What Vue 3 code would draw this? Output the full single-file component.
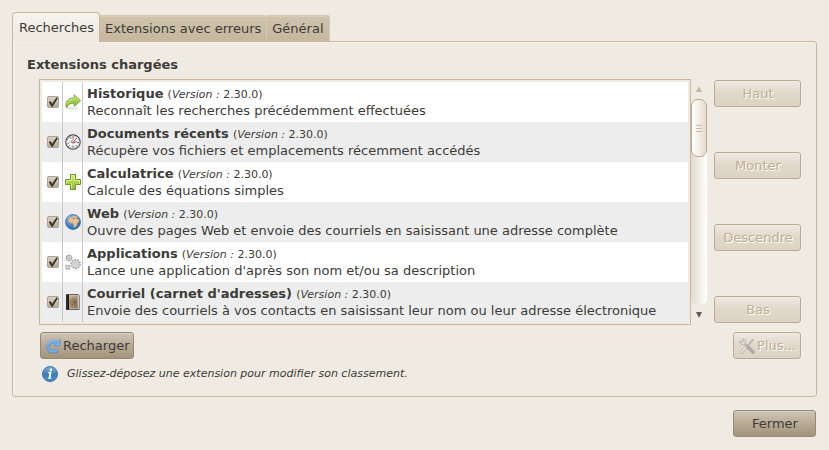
<script setup>
import { ref } from 'vue'

const tabs = ['Recherches', 'Extensions avec erreurs', 'Général']
const activeTab = ref(0)

const extensions = ref([
  { id: 'history', name: 'Historique', text: 'Reconnaît les recherches précédemment effectuées', version: '2.30.0', on: true },
  { id: 'recent', name: 'Documents récents', text: 'Récupère vos fichiers et emplacements récemment accédés', version: '2.30.0', on: true },
  { id: 'calc', name: 'Calculatrice', text: 'Calcule des équations simples', version: '2.30.0', on: true },
  { id: 'web', name: 'Web', text: 'Ouvre des pages Web et envoie des courriels en saisissant une adresse complète', version: '2.30.0', on: true },
  { id: 'apps', name: 'Applications', text: "Lance une application d'après son nom et/ou sa description", version: '2.30.0', on: true },
  { id: 'mail', name: "Courriel (carnet d'adresses)", text: 'Envoie des courriels à vos contacts en saisissant leur nom ou leur adresse électronique', version: '2.30.0', on: true },
])

const moves = ['Haut', 'Monter', 'Descendre', 'Bas']
</script>

<template>
  <main class="window">
    <div class="tabs" role="tablist">
      <button
        v-for="(tab, i) in tabs"
        :key="tab"
        type="button"
        role="tab"
        class="tab"
        :class="{ active: i === activeTab }"
        :aria-selected="i === activeTab"
        @click="activeTab = i"
      >{{ tab }}</button>
    </div>

    <section class="panel">
      <h1 class="heading">Extensions chargées</h1>

      <div class="body">
        <div class="list-frame">
          <table class="list">
            <tbody>
              <tr v-for="ext in extensions" :key="ext.id">
                <td class="check-cell">
                  <input :id="ext.id" v-model="ext.on" class="check" type="checkbox" />
                </td>
                <td class="icon-cell">
                  <svg v-if="ext.id === 'history'" class="icon" viewBox="0 0 16 16" aria-hidden="true">
                    <defs>
                      <linearGradient id="g-arrow" x1="0" y1="0" x2="0" y2="1">
                        <stop offset="0" stop-color="#c6e36a" /><stop offset="1" stop-color="#7cb32a" />
                      </linearGradient>
                    </defs>
                    <ellipse cx="7" cy="14.3" rx="6" ry="1.2" fill="#000" opacity=".12" />
                    <path d="M9.3.8 15.7 6.6 9.3 12.4V9.2C5.8 8.9 3.2 10 1.6 14-.8 8.2 3 3.9 9.3 3.9z" fill="url(#g-arrow)" stroke="#6b9a28" stroke-width=".8" stroke-linejoin="round" />
                    <path d="M10.1 2.7 14.3 6.6M1.8 10.2C2.8 6.5 6 5 10 4.9" fill="none" stroke="#e3f2ac" stroke-width=".8" />
                  </svg>
                  <svg v-else-if="ext.id === 'recent'" class="icon" viewBox="0 0 16 16" aria-hidden="true">
                    <circle cx="8" cy="8" r="7.2" fill="#f4f4f2" stroke="#4b4d4a" stroke-width="1.2" />
                    <circle cx="8" cy="8" r="6" fill="none" stroke="#c9cac7" stroke-width=".7" />
                    <path d="M8 11.5v2M12 8.5h2M11.4 11.4l1 1M3.6 12.4l1-1M11.2 4.8l1-1M8 2.2v1.4" stroke="#555753" stroke-width=".9" />
                    <path d="M.8 8.3 3 4.4 5.2 2.7 5 4.5 9 3.8 8 6.2 5.5 7.2 3 10z" fill="#fff" stroke="#888a85" stroke-width=".8" />
                    <path d="M6 8 8.2 8.8 11.6 7.8" fill="none" stroke="#6c6e6b" stroke-width=".9" />
                    <path d="M8.2 8.6 10.8 5.2" stroke="#e02020" stroke-width="1" />
                    <circle cx="8.2" cy="8.6" r="1" fill="#e05050" />
                  </svg>
                  <svg v-else-if="ext.id === 'calc'" class="icon" viewBox="0 0 16 16" aria-hidden="true">
                    <defs>
                      <linearGradient id="g-plus" x1="0" y1="0" x2="0" y2="1">
                        <stop offset="0" stop-color="#d3e670" /><stop offset="1" stop-color="#93bf2c" />
                      </linearGradient>
                    </defs>
                    <path d="M5.5.5h5v5h5v5h-5v5h-5v-5h-5v-5h5z" fill="url(#g-plus)" stroke="#659a2b" stroke-linejoin="round" />
                    <path d="M6.5 9.5v5M6.5 6.5v-5h3v5h5v3M1.5 9.5v-3h5" fill="none" stroke="#e6f2a6" stroke-width=".8" />
                  </svg>
                  <svg v-else-if="ext.id === 'web'" class="icon" viewBox="0 0 16 16" aria-hidden="true">
                    <defs>
                      <radialGradient id="g-globe" cx=".35" cy=".25" r=".8">
                        <stop offset="0" stop-color="#8fbcf0" /><stop offset="1" stop-color="#1f5fae" />
                      </radialGradient>
                    </defs>
                    <circle cx="8" cy="8" r="7.5" fill="url(#g-globe)" stroke="#3b73b8" stroke-width=".8" />
                    <path d="M4 5.3 4.6 3.4 6.3 3.7 7.4 2.3 10 1.6 12.6 3.1 11 4.2 13.3 5.2 14.3 7 12.6 8.8 12 11 10 13.6 8.7 13.2 8.7 10.8 7.7 9 5.2 9 3.6 7.4z" fill="#efbd85" stroke="#d09a60" stroke-width=".4" />
                    <path d="M6.7 4.2 9 3.3 10.5 4.6 8.5 5z" fill="#5e99dc" />
                  </svg>
                  <svg v-else-if="ext.id === 'apps'" class="icon" viewBox="0 0 16 16" aria-hidden="true">
                    <circle cx="10.7" cy="10" r="4.4" fill="#dedede" stroke="#a9a9a9" stroke-width="1.6" stroke-dasharray="1.8 .9" />
                    <circle cx="10.7" cy="10" r="3.6" fill="#e3e3e3" stroke="#b4b4b4" stroke-width=".7" />
                    <circle cx="10.7" cy="10" r="1.4" fill="#fff" stroke="#a0a0a0" stroke-width=".8" />
                    <circle cx="4" cy="4" r="2.9" fill="#d2d2d2" stroke="#9b9b9b" stroke-width="1.1" stroke-dasharray="1.5 .5" />
                    <circle cx="4" cy="4" r="1.1" fill="#c0c0c0" />
                    <path d="M.9 11.4h3.8v3.8H.9z" fill="#cdcdcd" stroke="#999" stroke-dasharray="1.4 .5" />
                    <circle cx="2.8" cy="13.3" r=".8" fill="#eee" />
                  </svg>
                  <svg v-else class="icon" viewBox="0 0 16 16" aria-hidden="true">
                    <defs>
                      <linearGradient id="g-book" x1="0" y1="0" x2="1" y2="1">
                        <stop offset="0" stop-color="#d2bb9e" /><stop offset="1" stop-color="#8a6a49" />
                      </linearGradient>
                    </defs>
                    <path d="M1.5.5h11.8l.9 1v14H1.5z" fill="#f2eee6" stroke="#45403a" stroke-width=".8" />
                    <path d="M3.6 1.2h9.2v13.4H3.6z" fill="url(#g-book)" />
                    <path d="M1 .8h3v14.7H1z" fill="#171717" />
                    <path d="M2 1.5v13" stroke="#55534f" stroke-width=".7" />
                    <path d="M9.8 6.6v2.6c.3 1 1.4.4 1.5-.9C11.5 5.7 9.7 4.7 8.2 4.8 6.3 4.9 5.3 6.5 5.4 8.2 5.5 10.2 7.5 11.3 9.6 10.6" fill="none" stroke="#4f3a25" stroke-width=".5" />
                    <circle cx="8.4" cy="8" r="1.3" fill="none" stroke="#4f3a25" stroke-width=".5" />
                  </svg>
                </td>
                <td class="text-cell">
                  <label :for="ext.id"><b>{{ ext.name }}</b> <small>(<i>Version :</i> {{ ext.version }})</small></label>
                  <p>{{ ext.text }}</p>
                </td>
              </tr>
            </tbody>
          </table>
        </div>

        <div class="scrollbar" aria-hidden="true">
          <span class="step up"><svg viewBox="0 0 6 6"><path d="M3 0 6 6H0z" /></svg></span>
          <div class="trough"><div class="thumb"><i></i><i></i><i></i></div></div>
          <span class="step down"><svg viewBox="0 0 6 6"><path d="M3 6 0 0h6z" /></svg></span>
        </div>

        <div class="moves">
          <button v-for="move in moves" :key="move" type="button" class="btn" disabled>{{ move }}</button>
        </div>
      </div>

      <div class="row">
        <button type="button" class="btn">
          <svg class="icon" viewBox="0 0 16 16" aria-hidden="true">
            <path d="M3 13.8Q8 16.4 13 13.8" fill="none" stroke="#000" stroke-width="1.2" opacity=".15" />
            <path d="M12.6 11.2A5.1 5.1 0 1 1 11 4.2" fill="none" stroke="#5089c6" stroke-width="3.8" />
            <path d="M15.3 1.200V8H8.500z" fill="#7db2e6" stroke="#5089c6" stroke-width=".7" stroke-linejoin="round" />
            <path d="M12.4 11.3A5.1 5.1 0 1 1 11.600 4.700" fill="none" stroke="#75abe1" stroke-width="2.600" />
            <path d="M2.400 6.5A5.8 5.8 0 0 1 10.500 2.900" fill="none" stroke="#b0d1f2" stroke-width=".8" />
          </svg>
          Recharger
        </button>
        <button type="button" class="btn more" disabled>
          <svg class="icon" viewBox="0 0 16 16" aria-hidden="true">
            <path d="M14 1.6 8.4 8" stroke="#b9b5ae" stroke-width="1.8" stroke-linecap="round" />
            <path d="M7.6 8.6 2.2 14.3" stroke="#bdb8b0" stroke-width="3.4" stroke-linecap="round" />
            <path d="M7.6 8.6 2.2 14.3" stroke="#e6e2db" stroke-width="1.8" stroke-linecap="round" />
            <path d="M5.8 5.8 9 9" stroke="#b8b3ac" stroke-width="2.4" />
            <path d="M9.2 9.2 14 14" stroke="#b0aba4" stroke-width="3.6" stroke-linecap="round" />
            <path d="M3.2.9C5.3.6 7 2.4 6.6 4.3 6.2 6.3 3.9 7.2 2.2 6.1 1 5.4.6 4.2.8 3L3 4.4 4.6 3z" fill="#e3dfd8" stroke="#b4afa8" stroke-width=".9" stroke-linejoin="round" />
          </svg>
          Plus...
        </button>
      </div>

      <p class="hint">
        <svg class="icon" viewBox="0 0 16 16" aria-hidden="true">
          <defs>
            <linearGradient id="g-info" x1="0" y1="0" x2="0" y2="1">
              <stop offset="0" stop-color="#7fb0dd" /><stop offset=".5" stop-color="#3f7fbd" /><stop offset="1" stop-color="#4a8cc9" />
            </linearGradient>
          </defs>
          <circle cx="8" cy="8" r="7.5" fill="url(#g-info)" stroke="#33699f" stroke-width=".9" />
          <circle cx="8.9" cy="3.9" r="1.3" fill="#fff" />
          <path d="M6.3 6.6H8.5L7.5 12" fill="none" stroke="#fff" stroke-width="1.8" />
          <path d="M6.3 12.2H9.3" stroke="#fff" stroke-width="1.2" />
        </svg>
        Glissez-déposez une extension pour modifier son classement.
      </p>
    </section>

    <footer class="actions">
      <button type="button" class="btn close">Fermer</button>
    </footer>
  </main>
</template>

<style>
body {
  margin: 0;
  background: #efebe3;
}
</style>

<style scoped>
.window {
  box-sizing: border-box;
  padding: 12px;
  background: #efebe3;
  color: #3c3b37;
  font: 13px/17px "DejaVu Sans", "Liberation Sans", sans-serif;
}

button {
  margin: 0;
  color: inherit;
  font: inherit;
  white-space: nowrap;
}

.tabs {
  display: flex;
  align-items: flex-end;
}

.tab {
  box-sizing: border-box;
  height: 26px;
  padding: 0 5px;
  border: 1px solid #d3c8b3;
  border-bottom: 0;
  border-left-width: 0;
  border-top-right-radius: 3px;
  background: linear-gradient(#d0c4ae, #c6b79e);
  box-shadow: inset 0 1px #d8cdb9;
}

.tab.active {
  z-index: 1;
  height: 30px;
  margin-bottom: -1px;
  padding: 0 5px 0 6px;
  border: 1px solid #c8b99c;
  border-bottom: 0;
  border-radius: 4px 4px 0 0;
  background: linear-gradient(#f6f3ec, #efebe3 70%);
  box-shadow: none;
}

.panel {
  padding: 14px 15px 14px 14px;
  border: 1px solid #c8b99c;
  border-radius: 0 3px 3px 3px;
  box-shadow: inset 1px 1px #f5f1ea;
}

.heading {
  margin: 0 0 6px;
  font-size: 13px;
  line-height: 17px;
}

.body {
  display: flex;
  margin-left: 12px;
}

.list-frame {
  flex: 1;
  min-width: 0;
  padding: 2px;
  border: 1px solid #c8b99c;
}

.list {
  width: 100%;
  border-collapse: collapse;
  background: #fff;
}

.list tr:nth-child(even) {
  background: #ededed;
}

.list td {
  box-sizing: border-box;
  height: 40px;
  padding: 0;
}

.check-cell,
.icon-cell {
  width: 20px;
  border-right: 1px solid #c8c8c8;
  text-align: center;
}

.icon {
  flex: none;
  display: block;
  width: 16px;
  height: 16px;
}

.icon-cell .icon {
  margin: 0 auto;
}

.check {
  position: relative;
  appearance: none;
  box-sizing: border-box;
  display: block;
  width: 12px;
  height: 12px;
  margin: 0 3px 0 5px;
  border: 1px solid #b0a48f;
  border-radius: 2px;
  background: linear-gradient(#dcd2c5, #b9ac97);
}

.check:checked::after {
  content: "";
  position: absolute;
  left: 0;
  top: 0;
  width: 10px;
  height: 10px;
  background: #33322f;
  clip-path: polygon(8% 50%, 25% 42%, 42% 68%, 84% 5%, 100% 10%, 46% 98%, 36% 98%);
}

.list .text-cell {
  padding-bottom: 1px;
}

.text-cell label,
.text-cell p {
  display: block;
  margin: 0 0 0 4px;
  line-height: 17px;
  white-space: nowrap;
}

.text-cell small {
  font-size: 11px;
  line-height: 11px;
}

.scrollbar {
  display: flex;
  flex-direction: column;
  width: 16px;
}

.step {
  display: grid;
  place-items: center;
  height: 20px;
}

.step svg {
  width: 6px;
  height: 6px;
  fill: #5c5a54;
}

.step.up svg {
  fill: #c5b79d;
}

.trough {
  flex: 1;
  border-radius: 7px;
  background: linear-gradient(90deg, #e2d9cb, #fff);
}

.thumb {
  box-sizing: border-box;
  display: flex;
  flex-direction: column;
  align-items: center;
  justify-content: center;
  gap: 2px;
  height: 58px;
  border: 1px solid #b8a88d;
  border-radius: 7px;
  background: linear-gradient(90deg, #fff, #e4dacc);
}

.thumb i {
  width: 6px;
  height: 1px;
  background: #c8bba3;
}

.moves {
  display: flex;
  flex-direction: column;
  justify-content: space-between;
  width: 87px;
  margin-left: 7px;
  padding: 1px 0 2px;
}

.btn {
  box-sizing: border-box;
  display: flex;
  align-items: center;
  justify-content: center;
  gap: 2px;
  height: 27px;
  padding: 0 3px 0 4px;
  border: 1px solid #978971;
  border-radius: 3px;
  background: linear-gradient(#cfc4b5, #b8aa96 50%, #a4947b);
  box-shadow: inset 0 1px rgba(255, 255, 255, 0.2), 0 0 0 1px #f1ede6;
}

.btn:disabled {
  border-color: #b9aa92;
  background: linear-gradient(#eee8df, #e1d8cb 50%, #ddd3c5);
  color: #bfad92;
  text-shadow: 1px 1px #fff;
}

.more {
  min-width: 68px;
}

.row {
  display: flex;
  justify-content: space-between;
  margin: 7px 0 0 13px;
}

.hint {
  display: flex;
  align-items: center;
  gap: 9px;
  margin: 7px 0 0 15px;
  font-size: 11px;
  line-height: 16px;
  font-style: italic;
}

.actions {
  display: flex;
  justify-content: flex-end;
  margin-top: 13px;
  padding-right: 1px;
}

.close {
  width: 83px;
}
</style>
